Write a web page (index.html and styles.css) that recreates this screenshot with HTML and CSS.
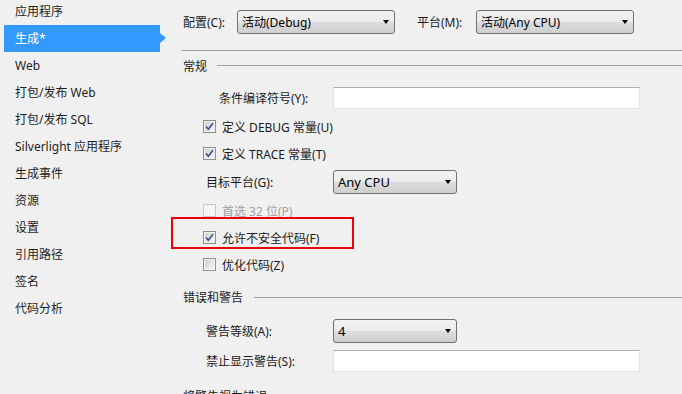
FILE: index.html
```html
<!DOCTYPE html>
<html lang="zh-CN">
<head>
<meta charset="utf-8">
<title>生成</title>
<link rel="stylesheet" href="styles.css">
</head>
<body>
<div class="app">
  <nav class="sidebar">
    <div class="nav-item">应用程序</div>
    <div class="nav-item active">生成*</div>
    <div class="nav-item">Web</div>
    <div class="nav-item">打包/发布 Web</div>
    <div class="nav-item">打包/发布 SQL</div>
    <div class="nav-item">Silverlight 应用程序</div>
    <div class="nav-item">生成事件</div>
    <div class="nav-item">资源</div>
    <div class="nav-item">设置</div>
    <div class="nav-item">引用路径</div>
    <div class="nav-item">签名</div>
    <div class="nav-item">代码分析</div>
  </nav>
  <main class="panel">
    <div class="toprow">
      <span class="lbl-config">配置(C):</span>
      <div class="combo combo-wide"><span>活动(Debug)</span><i class="arrow"></i></div>
      <span class="lbl-platform">平台(M):</span>
      <div class="combo combo-wide"><span>活动(Any CPU)</span><i class="arrow"></i></div>
    </div>
    <div class="separator"></div>

    <div class="group-head"><span>常规</span><div class="group-line"></div></div>

    <div class="row row-symbols">
      <span class="lbl-symbols">条件编译符号(Y):</span>
      <div class="textbox"></div>
    </div>

    <div class="cb-row first-cb">
      <svg class="cb" width="13" height="13" viewBox="0 0 13 13"><defs><linearGradient id="g1" x1="0" y1="0" x2="1" y2="1"><stop offset="0" stop-color="#d0d0d0"/><stop offset="1" stop-color="#f6f6f6"/></linearGradient></defs><rect x="0.5" y="0.5" width="12" height="12" fill="#f4f4f4" stroke="#8e8f8f"/><rect x="2" y="2" width="9" height="9" fill="url(#g1)"/><path d="M3 6.5 L5.3 9.2 L10 3.2" fill="none" stroke="#3b4f8c" stroke-width="1.6"/></svg>
      <span>定义 DEBUG 常量(U)</span>
    </div>
    <div class="cb-row">
      <svg class="cb" width="13" height="13" viewBox="0 0 13 13"><rect x="0.5" y="0.5" width="12" height="12" fill="#f4f4f4" stroke="#8e8f8f"/><rect x="2" y="2" width="9" height="9" fill="url(#g1)"/><path d="M3 6.5 L5.3 9.2 L10 3.2" fill="none" stroke="#3b4f8c" stroke-width="1.6"/></svg>
      <span>定义 TRACE 常量(T)</span>
    </div>

    <div class="row row-target">
      <span class="lbl-field">目标平台(G):</span>
      <div class="combo combo-narrow"><span class="combo-big">Any CPU</span><i class="arrow"></i></div>
    </div>

    <div class="cb-row disabled">
      <svg class="cb" width="13" height="13" viewBox="0 0 13 13"><rect x="0.5" y="0.5" width="12" height="12" fill="#f4f4f4" stroke="#c8c8c8"/></svg>
      <span>首选 32 位(P)</span>
    </div>
    <div class="cb-row marked">
      <svg class="cb" width="13" height="13" viewBox="0 0 13 13"><rect x="0.5" y="0.5" width="12" height="12" fill="#f4f4f4" stroke="#8e8f8f"/><rect x="2" y="2" width="9" height="9" fill="url(#g1)"/><path d="M3 6.5 L5.3 9.2 L10 3.2" fill="none" stroke="#3b4f8c" stroke-width="1.6"/></svg>
      <span>允许不安全代码(F)</span>
      <div class="highlight"></div>
    </div>
    <div class="cb-row">
      <svg class="cb" width="13" height="13" viewBox="0 0 13 13"><rect x="0.5" y="0.5" width="12" height="12" fill="#f4f4f4" stroke="#8e8f8f"/><rect x="2" y="2" width="9" height="9" fill="url(#g1)"/></svg>
      <span>优化代码(Z)</span>
    </div>

    <div class="group-head group-errors"><span>错误和警告</span><div class="group-line"></div></div>

    <div class="row row-level">
      <span class="lbl-field">警告等级(A):</span>
      <div class="combo combo-narrow"><span class="combo-big">4</span><i class="arrow"></i></div>
    </div>
    <div class="row row-suppress">
      <span class="lbl-field">禁止显示警告(S):</span>
      <div class="textbox"></div>
    </div>

    <div class="group-head group-treat"><span>将警告视为错误</span></div>
  </main>
</div>
</body>
</html>
```

FILE: styles.css
```css
* { box-sizing: border-box; }

html, body {
  margin: 0;
  padding: 0;
  background: #f0f0f0;
  overflow: hidden;
}

body {
  font-family: "Noto Sans", "Noto Sans CJK SC", sans-serif;
  font-size: 12px;
  color: #1a1a1a;
  width: 682px;
  height: 394px;
}

.app {
  display: flex;
  height: 394px;
  overflow: hidden;
}

.sidebar {
  width: 170px;
  flex: none;
  margin-top: -2px;
}

.nav-item {
  height: 27px;
  line-height: 27px;
  margin-left: 4px;
  width: 156px;
  padding-left: 11px;
  white-space: nowrap;
  color: #1e1e1e;
  position: relative;
}

.nav-item.active {
  background: #3399ff;
  color: #fff;
}

.nav-item.active::after {
  content: "";
  position: absolute;
  right: -6px;
  top: 8px;
  border-left: 6px solid #3399ff;
  border-top: 5px solid transparent;
  border-bottom: 5px solid transparent;
}

.panel {
  flex: 1;
  display: block;
  padding-top: 10px;
  padding-left: 13px;
}

.toprow {
  display: flex;
  align-items: center;
  height: 24px;
}

.lbl-config { width: 54px; }
.lbl-platform { width: 59px; margin-left: 22px; }

.combo {
  position: relative;
  height: 24px;
  border: 1px solid #707070;
  border-radius: 3px;
  background: linear-gradient(to bottom, #f2f2f2 0%, #ebebeb 50%, #dddddd 50%, #cfcfcf 100%);
  display: flex;
  align-items: center;
  padding-left: 4px;
  color: #000;
  flex: none;
}

.combo-wide { width: 158px; }
.combo-narrow { width: 124px; }
.combo-big { font-size: 13px; }

.arrow {
  position: absolute;
  right: 5px;
  top: 9px;
  border-top: 4px solid #000;
  border-left: 3.5px solid transparent;
  border-right: 3.5px solid transparent;
}

.separator {
  margin-top: 16px;
  margin-left: -2px;
  height: 1px;
  background: #a0a0a0;
}

.group-head {
  display: flex;
  align-items: center;
  height: 20px;
  margin-top: 5px;
  color: #1a1a1a;
}

.group-line {
  flex: 1;
  height: 1px;
  background: #a0a0a0;
  margin-left: 10px;
  margin-top: -1px;
}

.group-errors { margin-top: 9px; }
.group-errors .group-line { margin-left: 11px; margin-top: 0; }
.group-treat { margin-top: 14px; }

.row {
  display: flex;
  align-items: center;
}

.textbox {
  flex: none;
  width: 307px;
  height: 22px;
  background: #fff;
  border: 1px solid #e2e3ea;
  border-top-color: #abadb3;
}

.row-symbols {
  height: 22px;
  margin-top: 11px;
}

.lbl-symbols {
  width: 150px;
  padding-left: 36px;
}

.lbl-field {
  width: 150px;
  padding-left: 23px;
}

.cb-row {
  position: relative;
  display: flex;
  align-items: center;
  height: 27px;
  padding-left: 20px;
  color: #1a1a1a;
}

.first-cb { margin-top: 4px; }

.cb {
  flex: none;
  margin-right: 6px;
}

.cb-row.disabled { color: #a0a0a0; }

.row-target {
  height: 24px;
  margin-top: 3px;
  margin-bottom: 3px;
}

.highlight {
  position: absolute;
  left: -12px;
  top: -7px;
  width: 183px;
  height: 32px;
  border: 2px solid #e8000b;
}

.row-level {
  height: 24px;
  margin-top: 12px;
}

.row-suppress {
  height: 22px;
  margin-top: 7px;
}
```
